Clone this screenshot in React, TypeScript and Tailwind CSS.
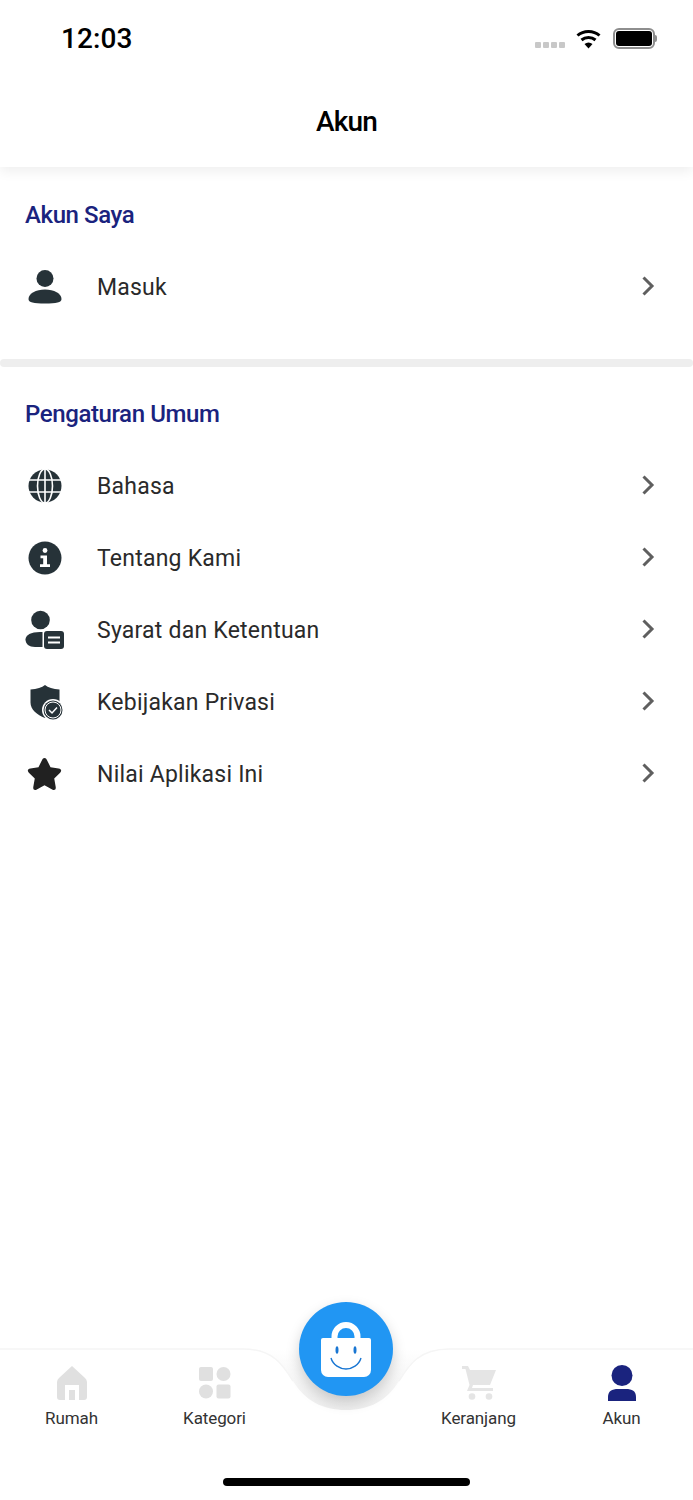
const generalItems = [
  { label: "Bahasa", icon: <GlobeIcon /> },
  { label: "Tentang Kami", icon: <InfoIcon /> },
  { label: "Syarat dan Ketentuan", icon: <TermsIcon /> },
  { label: "Kebijakan Privasi", icon: <ShieldIcon /> },
  { label: "Nilai Aplikasi Ini", icon: <StarIcon /> },
]

function PersonIcon() {
  return (
    <svg width="34" height="34" viewBox="0 0 34 34" fill="#263238">
      <circle cx="17" cy="8.500" r="8.500" />
      <path d="M17 19.500c-9 0-16.500 4-16.500 9.500 0 3.500 5 4.500 16.500 4.500s16.500-1 16.500-4.500c0-5.500-7.500-9.500-16.500-9.500z" />
    </svg>
  )
}

function GlobeIcon() {
  return (
    <svg width="34" height="34" viewBox="0 0 34 34">
      <circle cx="17" cy="17" r="16.500" fill="#263238" />
      <g fill="none" stroke="#fff" strokeWidth="1.600">
        <ellipse cx="17" cy="17" rx="7.500" ry="17" />
        <path d="M0 11h34M0 23h34M17 0v34" />
      </g>
    </svg>
  )
}

function InfoIcon() {
  return (
    <svg width="34" height="34" viewBox="0 0 34 34">
      <circle cx="17" cy="17" r="16.500" fill="#263238" />
      <circle cx="17" cy="9.500" r="2.400" fill="#fff" />
      <path d="M12.500 14.500h6.500v8.700h3v2.800H12v-2.800h3.200v-5.900h-2.700z" fill="#fff" />
    </svg>
  )
}

function TermsIcon() {
  return (
    <svg width="40" height="40" viewBox="0 0 40 40" fill="#263238">
      <circle cx="15.500" cy="10" r="9.300" />
      <path d="M17.500 22v15H10C4 37 .5 34 .5 29.500.5 25 6 22 15 22z" />
      <rect x="19" y="21" width="20" height="18" rx="3" />
      <path d="M23 27.500h12M23 32.500h12" stroke="#fff" strokeWidth="2" />
    </svg>
  )
}

function ShieldIcon() {
  return (
    <svg width="36" height="36" viewBox="0 0 36 36">
      <path d="M18 1c3 2.500 8 4 14.500 4.500v13c0 7-6 12.500-14.500 15.500C10 31 3.500 25.500 3.500 18.500v-13C10 5 15 3.500 18 1z" fill="#263238" />
      <circle cx="26" cy="26" r="11" fill="#fff" />
      <circle cx="26" cy="26" r="9.500" fill="#263238" />
      <circle cx="26" cy="26" r="8" fill="none" stroke="#fff" strokeWidth="1" />
      <path d="M22 26l3 3 5-5.500" fill="none" stroke="#fff" strokeWidth="1.500" />
    </svg>
  )
}

function StarIcon() {
  return (
    <svg width="35" height="35" viewBox="0 0 36 36" fill="#212121">
      <path d="M18 1c1.200 0 2 .9 2.500 2l3.700 7.600 8.300 1.200c2.800.4 3.500 2.400 1.600 4.300l-6.100 5.900 1.500 8.600c.5 2.800-1.200 4-3.600 2.700L18 29l-7.900 4.300c-2.400 1.300-4.100.1-3.600-2.700L8 22 1.900 16.100C0 14.200.7 12.200 3.500 11.800l8.300-1.200L15.500 3c.5-1.100 1.300-2 2.500-2z" />
    </svg>
  )
}

function Chevron() {
  return (
    <svg width="14" height="20" viewBox="0 0 14 20" fill="none" stroke="#5f5f5f" strokeWidth="3">
      <path d="M2.500 1.500 11 10l-8.500 8.500" />
    </svg>
  )
}

function Row({ icon, label }: { icon: React.ReactNode; label: string }) {
  return (
    <div className="flex h-[72px] items-center">
      <div className="flex w-[89px] shrink-0 justify-center">{icon}</div>
      <span className="ml-[8px] flex-1 pt-[2px] text-[23px] tracking-[0.22px] text-[#2a2a2a]">{label}</span>
      <div className="mr-[38px] mb-[2px]">
        <Chevron />
      </div>
    </div>
  )
}

function NavItem({ label, icon }: { label: string; icon: React.ReactNode }) {
  return (
    <div className="flex w-[143px] flex-col items-center">
      <div className="flex h-[38px] items-center justify-center">{icon}</div>
      <span className="mt-[4px] text-[17px] leading-[24px] tracking-[-0.1px] text-[#333333]">{label}</span>
    </div>
  )
}

function BagIcon() {
  return (
    <svg width="52" height="56" viewBox="0 0 52 56">
      <path d="M14.500 19v-3.500a11.500 11.500 0 0 1 23 0V19" fill="none" stroke="#fff" strokeWidth="6" />
      <path d="M3 17h46a2 2 0 0 1 2 2v30a7 7 0 0 1-7 7H8a7 7 0 0 1-7-7V19a2 2 0 0 1 2-2z" fill="#fff" />
      <ellipse cx="17" cy="29" rx="1.500" ry="3.800" fill="#1976d2" />
      <ellipse cx="35" cy="29" rx="1.500" ry="3.800" fill="#1976d2" />
      <path d="M11 37c2 7 9 11 15 11s13-4 15-11" fill="none" stroke="#1976d2" strokeWidth="1.400" />
    </svg>
  )
}

export default function App() {
  return (
    <div className="flex h-[1500px] w-[693px] flex-col overflow-hidden bg-white font-['Roboto',sans-serif]">
      <header className="relative z-10 h-[167px] bg-white shadow-[0_4px_12px_rgba(0,0,0,0.07)]">
        <div className="flex h-[76px] items-center justify-between pt-[1px] pl-[61px] pr-[36px]">
          <span className="text-[28px] font-medium tracking-[0.1px] text-black">12:03</span>
          <div className="flex items-center">
            <div className="mt-[13px] flex gap-[2px]">
              <span className="h-[6px] w-[6px] rounded-[1px] bg-[#c8c8c8]" />
              <span className="h-[6px] w-[6px] rounded-[1px] bg-[#c8c8c8]" />
              <span className="h-[6px] w-[6px] rounded-[1px] bg-[#c8c8c8]" />
              <span className="h-[6px] w-[6px] rounded-[1px] bg-[#c8c8c8]" />
            </div>
            <svg className="ml-[11px]" width="25" height="20" viewBox="0 0 25 20" fill="none" stroke="#000" strokeWidth="3">
              <path d="M1.500 6.500c6-5.500 16-5.500 22 0" />
              <path d="M5.500 11c4-3.500 10-3.500 14 0" />
              <path d="M12.500 19.500 8.500 15c2.500-2 5.500-2 8 0z" fill="#000" stroke="none" />
            </svg>
            <div className="ml-[12px] flex items-center">
              <div className="flex h-[21px] w-[42px] items-center justify-center rounded-[6px] border-2 border-[#8e8e8e]">
                <div className="h-[15px] w-[36px] rounded-[3px] bg-black" />
              </div>
              <div className="h-[7px] w-[2px] rounded-r-[2px] bg-[#8e8e8e]" />
            </div>
          </div>
        </div>
        <h1 className="mt-[27px] text-center text-[28px] leading-[37px] font-medium tracking-[-0.8px] text-black">Akun</h1>
      </header>

      <main className="flex-1">
        <section className="pt-[32px] pb-[36px]">
          <h2 className="mb-[20px] pl-[25px] text-[24px] leading-[32px] font-medium tracking-[-0.4px] text-[#1a237e]">Akun Saya</h2>
          <Row icon={<PersonIcon />} label="Masuk" />
        </section>
        <div className="h-[8px] rounded-full bg-[#eeeeee]" />
        <section className="pt-[31px]">
          <h2 className="mb-[20px] pl-[25px] text-[24px] leading-[32px] font-medium tracking-[-0.4px] text-[#1a237e]">Pengaturan Umum</h2>
          {generalItems.map((item) => (
            <Row key={item.label} icon={item.icon} label={item.label} />
          ))}
        </section>
      </main>

      <nav className="relative h-[151px] bg-white">
        <svg className="absolute -top-[1px] left-0" width="693" height="80" viewBox="0 0 693 80">
          <defs>
            <linearGradient id="notch" x1="0" y1="0" x2="0" y2="1">
              <stop offset="0" stopColor="#ffffff" />
              <stop offset="1" stopColor="#eeeeee" />
            </linearGradient>
          </defs>
          <path d="M243 1c30 0 40 16 50 32 12 20 30 29 53 29s41-9 53-29c10-16 20-32 50-32z" fill="url(#notch)" />
          <path d="M0 1h243c30 0 40 16 50 32M693 1H449c-30 0-40 16-50 32" fill="none" stroke="#f5f5f5" strokeWidth="1.500" />
        </svg>
        <div className="absolute -top-[47px] left-[299px] flex h-[94px] w-[94px] items-center justify-center rounded-full bg-[#2196f3] shadow-[0_6px_14px_rgba(0,0,0,0.18)]">
          <BagIcon />
        </div>
        <div className="relative flex pt-[15px]">
          <NavItem
            label="Rumah"
            icon={
              <svg width="30" height="34" viewBox="0 0 30 34" fill="#e0e0e0">
                <path d="M15 0 28 12a6 6 0 0 1 2 4v15a3 3 0 0 1-3 3h-5V19H8v15H3a3 3 0 0 1-3-3V16a6 6 0 0 1 2-4z" />
                <path d="M12 24h6v10h-6z" />
              </svg>
            }
          />
          <NavItem
            label="Kategori"
            icon={
              <svg width="32" height="32" viewBox="0 0 32 32" fill="#e0e0e0">
                <rect x="0" y="0" width="14" height="14" rx="2" />
                <circle cx="24.500" cy="7" r="7" />
                <circle cx="7" cy="24.500" r="7" />
                <rect x="17.500" y="17.500" width="14" height="14" rx="2" />
              </svg>
            }
          />
          <div className="w-[121px]" />
          <NavItem
            label="Keranjang"
            icon={
              <svg width="34" height="34" viewBox="0 0 34 34" fill="#e5e5e5">
                <path d="M0 0h6l2 4h26l-6 15H11l-1 3h21v3H5l2.500-6L3.500 3H0z" />
                <circle cx="10" cy="30.500" r="3.300" />
                <circle cx="27" cy="30.500" r="3.300" />
              </svg>
            }
          />
          <NavItem
            label="Akun"
            icon={
              <svg width="28" height="36" viewBox="0 0 28 36" fill="#1a237e">
                <circle cx="14" cy="10.500" r="10.500" />
                <path d="M0 36v-4c0-6 4-8 10-8h8c6 0 10 2 10 8v4z" />
              </svg>
            }
          />
        </div>
        <div className="absolute top-[129px] left-[223px] h-[8px] w-[247px] rounded-full bg-black" />
      </nav>
    </div>
  )
}
